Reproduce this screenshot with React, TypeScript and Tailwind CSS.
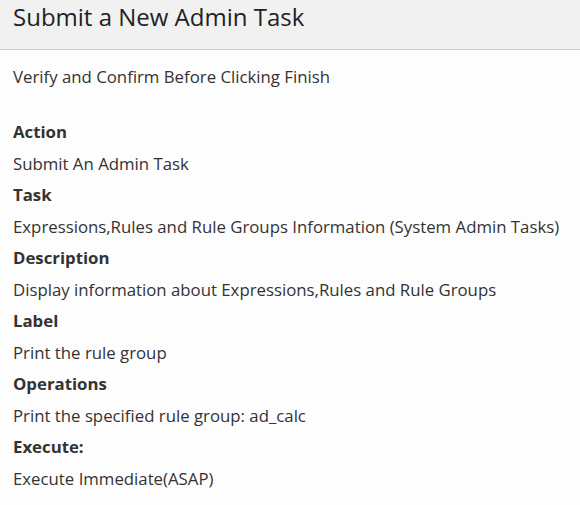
const rows: [string, string][] = [
  ["Action", "Submit An Admin Task"],
  ["Task", "Expressions,Rules and Rule Groups Information (System Admin Tasks)"],
  ["Description", "Display information about Expressions,Rules and Rule Groups"],
  ["Label", "Print the rule group"],
  ["Operations", "Print the specified rule group: ad_calc"],
  ["Execute:", "Execute Immediate(ASAP)"],
];

export default function App() {
  return (
    <div
      className="w-[580px] h-[505px] bg-[#fdfdfd] text-[#333333] overflow-hidden"
      style={{ fontFamily: '"Open Sans", "Noto Sans", sans-serif' }}
    >
      <div className="h-[50px] bg-[#f1f1f1] border-b border-[#cccccc] px-[13px] pt-[1px]">
        <h1 className="text-[24px] leading-[32px] text-[#222222]">Submit a New Admin Task</h1>
      </div>

      <div className="px-[13px] pt-[15px]">
        <p className="text-[16.8px] leading-[24px]">Verify and Confirm Before Clicking Finish</p>

        <div className="mt-[27px]">
          {rows.map(([label, value]) => (
            <div key={label}>
              <div className="text-[16.8px] leading-[31.5px] font-bold">{label}</div>
              <div className="text-[16.8px] leading-[31.5px]">{value}</div>
            </div>
          ))}
        </div>
      </div>
    </div>
  );
}
